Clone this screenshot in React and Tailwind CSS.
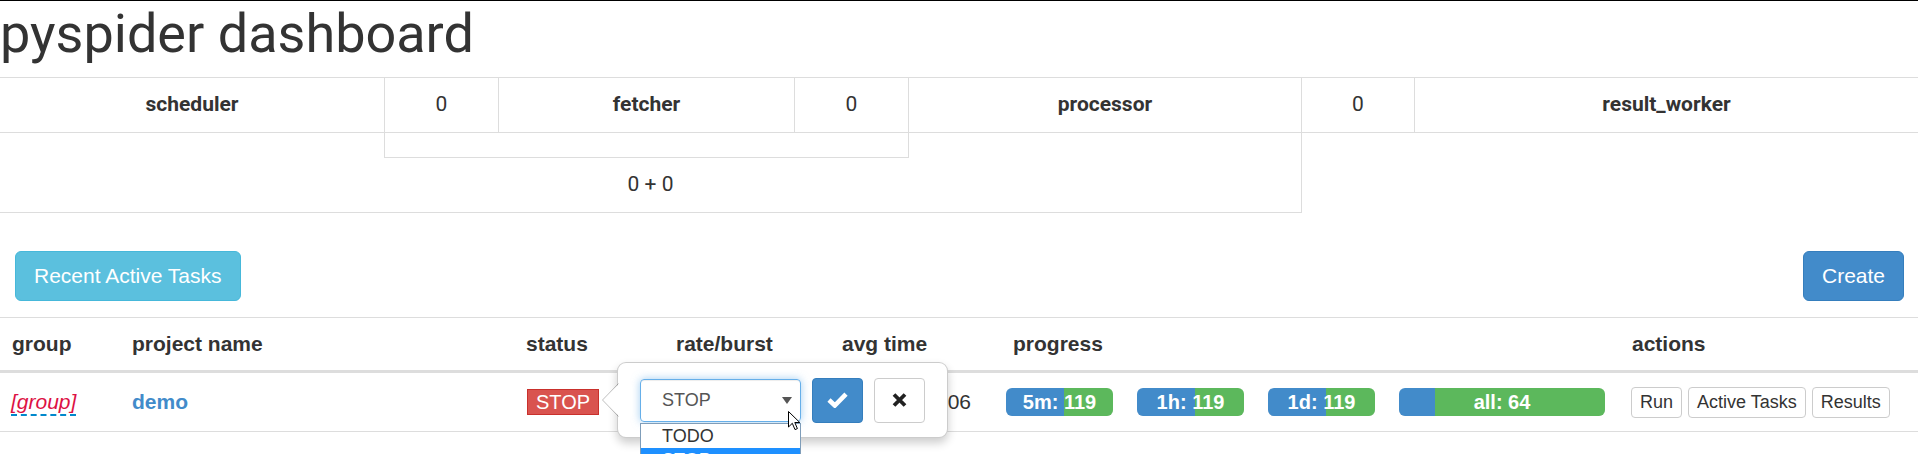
import React from "react";

function Bar({ wClass, splitClass, label }) {
  return (
    <div className={"relative h-[28px] rounded-[6px] overflow-hidden flex shadow-[inset_0_-1px_0_rgba(0,0,0,0.15)] " + wClass}>
      <div className={"h-full bg-[#428bca] " + splitClass} />
      <div className="h-full flex-1 bg-[#5cb85c]" />
      <span className="absolute inset-0 flex items-center justify-center text-white font-bold text-[20px] leading-none">
        {label}
      </span>
    </div>
  );
}

function SmallBtn({ children }) {
  return (
    <button className="h-[31px] px-[8px] text-[18px] leading-none text-[#333] bg-white border border-[#ccc] rounded-[4px]">
      {children}
    </button>
  );
}

export default function App() {
  return (
    <div className="w-[1918px] h-[454px] overflow-hidden bg-white text-[#333] border-t border-black font-['Liberation_Sans',Arial,sans-serif]">
      {/* top section */}
      <div className="font-[Roboto,sans-serif]">
        <h1 className="text-[54px] leading-[59px] pt-[3px] h-[76px] font-normal">pyspider dashboard</h1>
        <div className="grid grid-cols-[384px_114px_296px_114px_393px_113px_1fr] h-[56px] border-y border-[#ddd] text-[21px]">
          <div className="flex items-center justify-center font-bold">scheduler</div>
          <div className="flex items-center justify-center border-l border-[#ddd]">0</div>
          <div className="flex items-center justify-center border-l border-[#ddd] font-bold">fetcher</div>
          <div className="flex items-center justify-center border-l border-[#ddd]">0</div>
          <div className="flex items-center justify-center border-l border-[#ddd] font-bold">processor</div>
          <div className="flex items-center justify-center border-l border-[#ddd]">0</div>
          <div className="flex items-center justify-center border-l border-[#ddd] font-bold">result_worker</div>
        </div>
        <div className="flex">
          <div className="w-[1302px] border-r border-[#ddd]">
            <div className="ml-[384px] w-[525px] h-[25px] border-x border-b border-[#ddd]" />
            <div className="h-[55px] border-b border-[#ddd] flex items-center justify-center text-[21px]">0 + 0</div>
          </div>
          <div className="flex-1" />
        </div>
      </div>

      {/* buttons */}
      <div className="flex justify-between items-start mt-[38px] pl-[15px] pr-[14px]">
        <button className="h-[50px] px-[18px] text-[21px] text-white bg-[#5bc0de] border border-[#46b8da] rounded-[6px]">
          Recent Active Tasks
        </button>
        <button className="h-[50px] px-[18px] text-[21px] text-white bg-[#428bca] border border-[#357ebd] rounded-[6px]">
          Create
        </button>
      </div>

      {/* projects table */}
      <div className="mt-[16px] text-[21px]">
        <div className="flex h-[56px] border-t border-b-[3px] border-[#ddd] items-center font-bold">
          <div className="w-[120px] pl-[12px]">group</div>
          <div className="w-[394px] pl-[12px]">project name</div>
          <div className="w-[150px] pl-[12px]">status</div>
          <div className="w-[166px] pl-[12px]">rate/burst</div>
          <div className="w-[171px] pl-[12px]">avg time</div>
          <div className="w-[619px] pl-[12px]">progress</div>
          <div className="flex-1 pl-[12px]">actions</div>
        </div>
        <div className="relative flex h-[59px] border-b border-[#ddd] items-center">
          <div className="w-[120px] pl-[11px]">
            <span className="italic text-[#DD1144] border-b-[2px] border-dashed border-[#0088cc] leading-[24px] inline-block">[group]</span>
          </div>
          <div className="w-[394px] pl-[12px] font-bold text-[#428bca]">demo</div>
          <div className="w-[150px] pl-[13px]">
            <span className="inline-block bg-[#d9534f] border border-[#c9302c] text-white text-[20px] leading-[23px] px-[8px] pt-[1px]">STOP</span>
          </div>
          <div className="w-[166px] pl-[12px]" />
          <div className="w-[171px] pl-[12px] whitespace-nowrap">0.2266+0.006</div>
          <div className="w-[619px] pl-[5px] flex gap-[24px]">
            <Bar wClass="w-[107px]" splitClass="w-[58px]" label="5m: 119" />
            <Bar wClass="w-[107px]" splitClass="w-[58px]" label="1h: 119" />
            <Bar wClass="w-[107px]" splitClass="w-[58px]" label="1d: 119" />
            <Bar wClass="w-[206px]" splitClass="w-[36px]" label="all: 64" />
          </div>
          <div className="flex-1 pl-[11px] flex gap-[6px]">
            <SmallBtn>Run</SmallBtn>
            <SmallBtn>Active Tasks</SmallBtn>
            <SmallBtn>Results</SmallBtn>
          </div>

          {/* popover */}
          <div className="absolute z-10 left-[617px] top-[-11px] w-[331px] h-[76px] bg-white border border-black/20 rounded-[9px] shadow-[0_5px_10px_rgba(0,0,0,0.2)] flex items-center pl-[22px] gap-[11px]">
            <svg className="absolute left-[-16px] top-[20px]" width="18" height="34" viewBox="0 0 18 34">
              <polygon points="18,0 0.5,17 18,34" fill="white" />
              <polyline points="16.5,0.5 0.5,17 16.5,33.5" fill="none" stroke="rgba(0,0,0,0.25)" strokeWidth="1" />
            </svg>
            <div className="relative w-[161px] h-[43px] border border-[#66afe9] rounded-[4px] shadow-[inset_0_1px_1px_rgba(0,0,0,0.075),0_0_8px_rgba(102,175,233,0.6)] flex items-center pl-[21px] pr-[8px] text-[18px] text-[#555]">
              <span className="flex-1">STOP</span>
              <svg width="10" height="7" viewBox="0 0 10 7">
                <polygon points="0,0 10,0 5,7" fill="#555" />
              </svg>
              <div className="absolute left-[-1px] top-[43px] w-[161px] bg-white border border-[#7f9db9] text-[18px]">
                <div className="h-[24px] leading-[24px] pl-[21px] text-[#333]">TODO</div>
                <div className="h-[24px] leading-[24px] pl-[21px] bg-[#1e90ff] text-white">STOP</div>
              </div>
            </div>
            <button className="w-[51px] h-[45px] bg-[#428bca] border border-[#357ebd] rounded-[4px] flex items-center justify-center">
              <svg width="21" height="16" viewBox="0 0 21 16">
                <path d="M2 8 L7.8 13.5 L19 2.2" fill="none" stroke="white" strokeWidth="4.6" />
              </svg>
            </button>
            <button className="w-[51px] h-[45px] bg-white border border-[#ccc] rounded-[4px] flex items-center justify-center">
              <svg width="15" height="14" viewBox="0 0 15 14">
                <path d="M2 1.5 L13 12.5 M13 1.5 L2 12.5" stroke="#222" strokeWidth="3.8" />
              </svg>
            </button>
            <svg className="absolute left-[170px] top-[48px]" width="13" height="20" viewBox="0 0 13 20">
              <path d="M0.5 0.5 L0.5 16 L4.3 12.3 L7 18.6 L9.4 17.6 L6.8 11.5 L11.8 11.5 Z" fill="white" stroke="black" strokeWidth="1" strokeLinejoin="round" />
            </svg>
          </div>
        </div>
      </div>
    </div>
  );
}
